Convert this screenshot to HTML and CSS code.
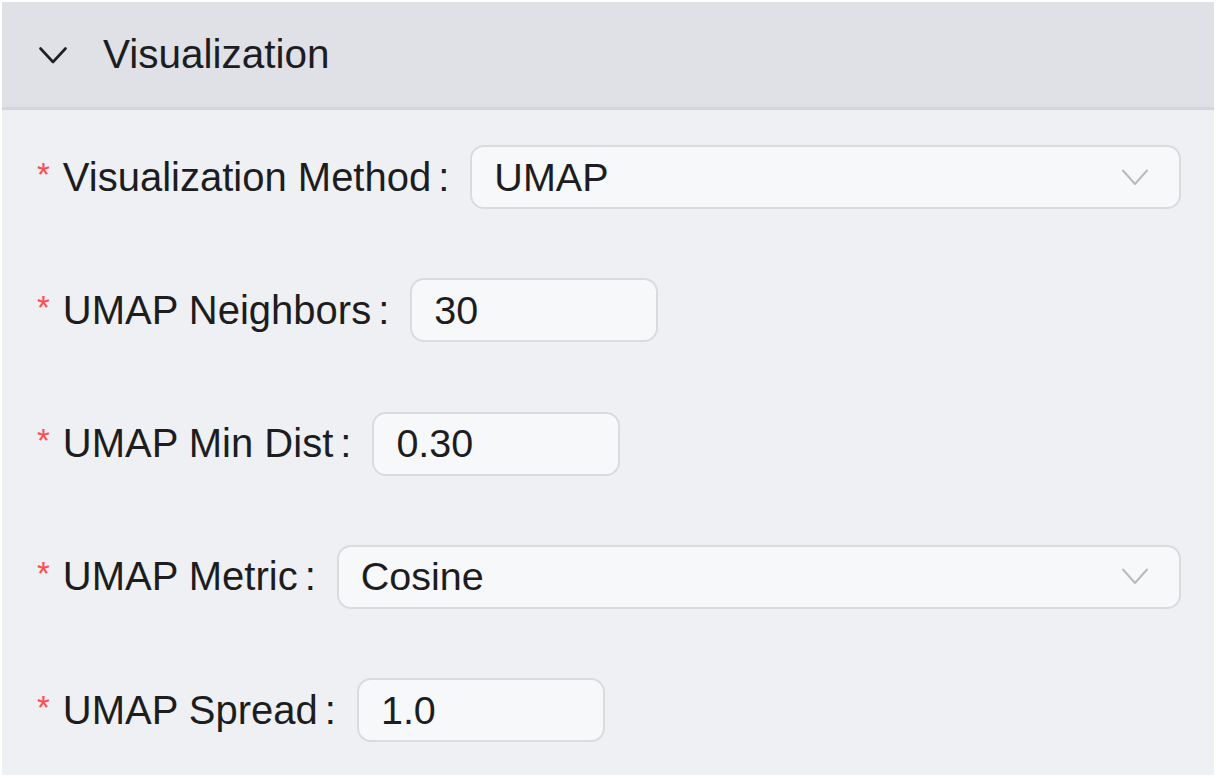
FILE: index.html
```html
<!DOCTYPE html>
<html lang="en">
<head>
    <meta charset="UTF-8">
    <meta name="viewport" content="width=device-width, initial-scale=1.0">
    <title>Visualization Settings</title>
    <link rel="stylesheet" href="styles.css">
</head>
<body>

    <div class="panel">
        <div class="panel-header">
            <svg class="collapse-icon" width="28" height="17" viewBox="0 0 28 17">
                <polyline points="1.5,1.5 14,15 26.5,1.5" fill="none" stroke="#1f1f22" stroke-width="2.6" stroke-linecap="round" stroke-linejoin="round"/>
            </svg>
            <span class="panel-title">Visualization</span>
        </div>

        <div class="panel-body">
            <div class="form-row">
                <label class="form-label"><span class="required">*</span>Visualization Method<span class="colon">:</span></label>
                <div class="select wide">
                    <span>UMAP</span>
                    <svg width="26" height="17" viewBox="0 0 26 17">
                        <polyline points="1,1.5 13,15 25,1.5" fill="none" stroke="#b9babe" stroke-width="2" stroke-linecap="round" stroke-linejoin="round"/>
                    </svg>
                </div>
            </div>

            <div class="form-row">
                <label class="form-label"><span class="required">*</span>UMAP Neighbors<span class="colon">:</span></label>
                <input class="field" type="text" value="30">
            </div>

            <div class="form-row">
                <label class="form-label"><span class="required">*</span>UMAP Min Dist<span class="colon">:</span></label>
                <input class="field" type="text" value="0.30">
            </div>

            <div class="form-row">
                <label class="form-label"><span class="required">*</span>UMAP Metric<span class="colon">:</span></label>
                <div class="select wide">
                    <span>Cosine</span>
                    <svg width="26" height="17" viewBox="0 0 26 17">
                        <polyline points="1,1.5 13,15 25,1.5" fill="none" stroke="#b9babe" stroke-width="2" stroke-linecap="round" stroke-linejoin="round"/>
                    </svg>
                </div>
            </div>

            <div class="form-row">
                <label class="form-label"><span class="required">*</span>UMAP Spread<span class="colon">:</span></label>
                <input class="field" type="text" value="1.0">
            </div>
        </div>
    </div>

</body>
</html>
```

FILE: styles.css
```css
html, body {
    height: 100%;
}
body {
    margin: 0;
    padding: 2px;
    box-sizing: border-box;
    background: #ffffff;
    font-family: "Liberation Sans", Arial, sans-serif;
    color: #1d1d1f;
}
.panel {
    height: 100%;
    display: flex;
    flex-direction: column;
    background: #eff0f3;
}
.panel-header {
    height: 108px;
    flex-shrink: 0;
    display: flex;
    align-items: center;
    padding-left: 37px;
    background: #dfe1e7;
    border-bottom: 3px solid #d4d6db;
    box-sizing: border-box;
}
.collapse-icon {
    margin-top: 2px;
}
.panel-title {
    margin-left: 36px;
    font-size: 40.5px;
}
.panel-body {
    flex: 1;
    display: flex;
    flex-direction: column;
    gap: 69.33px;
    padding: 35px 33px 0 35px;
}
.form-row {
    display: flex;
    align-items: center;
    height: 64px;
}
.form-label {
    display: flex;
    align-items: center;
    font-size: 40px;
    white-space: nowrap;
}
.required {
    color: #ff4d4f;
    font-size: 33px;
    margin-right: 13px;
    align-self: flex-start;
    margin-top: 1px;
}
.colon {
    margin: 0 21px 0 7px;
}
.field, .select {
    height: 64px;
    box-sizing: border-box;
    border: 2px solid #dadbdf;
    border-radius: 14px;
    background: #f7f8fa;
    font-family: inherit;
    font-size: 39.5px;
    color: #1d1d1f;
    padding: 0 22px;
}
.field {
    width: 248px;
    outline: none;
}
.select {
    flex: 1;
    display: flex;
    align-items: center;
    justify-content: space-between;
    padding-right: 31px;
}
```
